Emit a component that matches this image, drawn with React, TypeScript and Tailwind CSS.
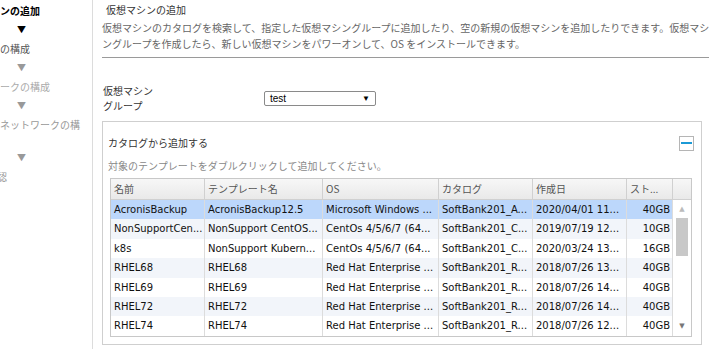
const rows: string[][] = [
  ["AcronisBackup", "AcronisBackup12.5", "Microsoft Windows ...", "SoftBank201_A...", "2020/04/01 11...", "40GB"],
  ["NonSupportCen...", "NonSupport CentOS...", "CentOs 4/5/6/7 (64...", "SoftBank201_C...", "2019/07/19 12...", "10GB"],
  ["k8s", "NonSupport Kubern...", "CentOs 4/5/6/7 (64...", "SoftBank201_C...", "2020/03/24 13...", "16GB"],
  ["RHEL68", "RHEL68", "Red Hat Enterprise ...", "SoftBank201_R...", "2018/07/26 13...", "40GB"],
  ["RHEL69", "RHEL69", "Red Hat Enterprise ...", "SoftBank201_R...", "2018/07/26 14...", "40GB"],
  ["RHEL72", "RHEL72", "Red Hat Enterprise ...", "SoftBank201_R...", "2018/07/26 14...", "40GB"],
  ["RHEL74", "RHEL74", "Red Hat Enterprise ...", "SoftBank201_R...", "2018/07/26 12...", "40GB"],
];

const headers = ["名前", "テンプレート名", "OS", "カタログ", "作成日", "スト..."];

const jp = "font-['Noto_Sans_CJK_JP',sans-serif]";
const cols = "grid grid-cols-[94px_118px_116px_94px_94px_46px]";

function Sidebar() {
  return (
    <div className={`w-[93px] shrink-0 border-r border-[#dcdcdc] overflow-hidden text-[10px] leading-[19px] ${jp}`}>
      <div className="pt-[1px]">
        <div className="font-bold text-black whitespace-nowrap">ンの追加</div>
        <div className="pl-[17px] text-[9px] text-black">▼</div>
        <div className="text-[#555] whitespace-nowrap">の構成</div>
        <div className="pl-[17px] text-[9px] text-[#999]">▼</div>
        <div className="text-[#aaa] whitespace-nowrap">ークの構成</div>
        <div className="pl-[17px] text-[9px] text-[#999]">▼</div>
        <div className="text-[#999] whitespace-nowrap">ネットワークの構</div>
        <div className="h-[14px]" />
        <div className="pl-[17px] text-[9px] text-[#999]">▼</div>
        <div className="text-[#999] whitespace-nowrap ml-[-3px]">認</div>
      </div>
    </div>
  );
}

function Table() {
  return (
    <div className="ml-[7px] mr-[9px] border border-[#c8c8c8] font-['DejaVu_Sans','Noto_Sans_CJK_JP',sans-serif] text-[10px]">
      <div className="flex h-[21px] bg-gradient-to-b from-[#f7f7f7] to-[#e9e9e9] border-b border-[#d0d0d0] text-[#555]">
        <div className={cols}>
          {headers.map((h) => (
            <div key={h} className={`px-[3px] leading-[20px] border-r border-[#d0d0d0] whitespace-nowrap overflow-hidden ${jp}`}>
              {h}
            </div>
          ))}
        </div>
        <div className="flex-1" />
      </div>
      <div className="flex h-[136px] overflow-hidden">
        <div>
          {rows.map((r, i) => (
            <div
              key={i}
              className={`${cols} h-[19.4px] text-[#111] ${
                i === 0 ? "bg-[#bcd7fb]" : i % 2 === 1 ? "bg-[#f2f5fa]" : "bg-white"
              }`}
            >
              {r.map((c, j) => (
                <div
                  key={j}
                  className={`px-[3px] leading-[19px] whitespace-nowrap overflow-hidden border-r border-[#dcdcdc] ${
                    j === 5 ? "text-right pr-[2px]" : ""
                  }`}
                >
                  {c}
                </div>
              ))}
            </div>
          ))}
        </div>
        {/* scrollbar */}
        <div className="flex-1 flex flex-col items-center bg-white">
          <div className="h-[18px] flex items-center text-[7px] text-[#bbb]">▲</div>
          <div className="w-[12px] h-[38px] bg-[#c8c8c8]" />
          <div className="flex-1" />
          <div className="h-[20px] flex items-center text-[7px] text-[#777]">▼</div>
        </div>
      </div>
    </div>
  );
}

export default function App() {
  return (
    <div className="w-[709px] h-[349px] flex overflow-hidden bg-white">
      <Sidebar />
      <div className={`flex-1 pl-[9px] ${jp} text-[10px] overflow-hidden`}>
        <div className="pt-[2px] pl-[4px] leading-[16px] text-[#333]">仮想マシンの追加</div>
        <div className="mt-[2px] leading-[16px] text-[#666] whitespace-nowrap">
          <div>仮想マシンのカタログを検索して、指定した仮想マシングループに追加したり、空の新規の仮想マシンを追加したりできます。仮想マシ</div>
          <div>ングループを作成したら、新しい仮想マシンをパワーオンして、OS をインストールできます。</div>
        </div>
        <div className="mt-[5px] h-[1px] bg-[#9a9a9a]" />

        <div className="mt-[25px] flex items-center">
          <div className="w-[162px] pl-[1px] leading-[15px] text-[#333]">
            <div>仮想マシン</div>
            <div>グループ</div>
          </div>
          <div className="w-[112px] h-[15px] border border-[#8a8a8a] rounded-[2px] flex items-center justify-between px-[5px] font-['Liberation_Sans',sans-serif] text-[10px] text-black mt-[1px]">
            <span>test</span>
            <span className="text-[8px]">▼</span>
          </div>
        </div>

        <div className="mt-[8px] w-[600px] h-[224px] border border-[#cfcfcf]">
          <div className="flex items-center justify-between pl-[5px] pr-[7px] pt-[13px]">
            <div className="leading-[16px] text-[#333]">カタログから追加する</div>
            <div className="w-[15px] h-[15px] border border-[#b5b5b5] bg-white flex items-center justify-center">
              <div className="w-[11px] h-[2px] bg-[#1b9ad6]" />
            </div>
          </div>
          <div className="mt-[7px] pl-[5px] leading-[16px] text-[#888]">対象のテンプレートをダブルクリックして追加してください。</div>
          <div className="mt-[4px]">
            <Table />
          </div>
        </div>
      </div>
    </div>
  );
}
